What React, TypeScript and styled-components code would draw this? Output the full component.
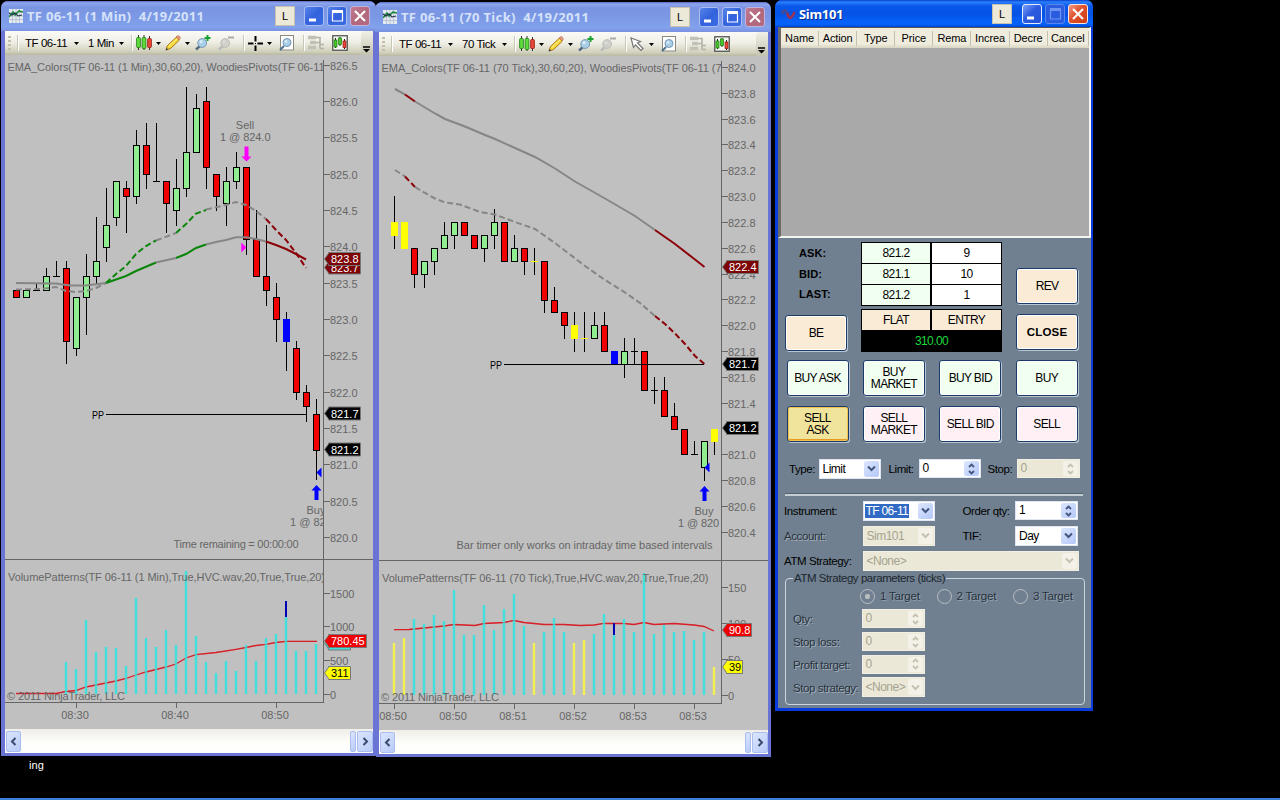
import React from "react";
import styled, { createGlobalStyle, css } from "styled-components";

const Global = createGlobalStyle`
  html, body { margin: 0; padding: 0; background: #000; overflow: hidden; }
  * { box-sizing: border-box; }
`;

const UI = `"Liberation Sans", Arial, sans-serif`;

/* ---------- desktop and windows ---------- */

const Desktop = styled.main`
  position: relative;
  width: 1280px;
  height: 800px;
  background: #000;
  border-bottom: 2px solid #3c7fd8;
  overflow: hidden;
  font: 11px ${UI};
  color: #000;
`;

const DesktopLabel = styled.div`
  position: absolute;
  left: 29px;
  top: 759px;
  color: #fff;
  letter-spacing: 0.1px;
`;

const Win = styled.section<{ $x: number; $y: number; $w: number; $h: number; $active?: boolean }>`
  position: absolute;
  left: ${(p) => p.$x}px;
  top: ${(p) => p.$y}px;
  width: ${(p) => p.$w}px;
  height: ${(p) => p.$h}px;
  display: flex;
  flex-direction: column;
  border-style: solid;
  border-width: 0 ${(p) => (p.$active ? 2 : 3)}px 3px ${(p) => (p.$active ? 3 : p.$x < 10 ? 4 : 3)}px;
  border-color: ${(p) => (p.$active ? "#0a3cdc" : "#6a74d4")};
  border-radius: 7px 7px 0 0;
  background: ${(p) => (p.$active ? "#0a52e6" : "#7b96e4")};
`;

const TitleBar = styled.header<{ $active?: boolean; $h: number }>`
  flex: none;
  height: ${(p) => p.$h}px;
  margin: 0 ${(p) => (p.$active ? -2 : -3)}px 0 ${(p) => (p.$active ? -3 : -4)}px;
  padding: 0 ${(p) => (p.$active ? 5 : 6)}px 0 ${(p) => (p.$active ? 6 : 8)}px;
  display: flex;
  align-items: center;
  border-radius: 7px 7px 0 0;
  background: ${(p) =>
    p.$active
      ? "linear-gradient(#0a3fd0 0, #2a80fa 2px, #0a58ea 6px, #0553e4 14px, #0562fb 22px, #0560f5 25px, #0342c8 100%)"
      : "linear-gradient(#5b6cc4 0, #8ea6ee 2px, #7a94e2 6px, #7b98e4 15px, #82a2ec 26px, #7a90e0 100%)"};
`;

const Title = styled.h1<{ $active?: boolean; $ls: number }>`
  flex: 1;
  margin: 0 0 0 ${(p) => (p.$active ? 3 : 4)}px;
  font: bold 13px "Noto Sans", "Open Sans", sans-serif;
  letter-spacing: ${(p) => p.$ls}px;
  white-space: pre;
  color: ${(p) => (p.$active ? "#fff" : "#d6e2fa")};
  ${(p) => p.$active && css`text-shadow: 1px 1px #0a2a90;`}
`;

const LinkBox = styled.span<{ $gap: number }>`
  width: 20px;
  height: 20px;
  margin-right: ${(p) => p.$gap}px;
  display: flex;
  align-items: center;
  justify-content: center;
  background: #ece9d8;
  border: 1px solid #c6c2ae;
  font-size: 11px;
`;

const CaptionButtons = styled.div`
  display: flex;
  gap: 3px;
`;

const CaptionButton = styled.button<{ $bg: string; $edge: string }>`
  width: 20px;
  height: 20px;
  padding: 0;
  border: 1px solid ${(p) => p.$edge};
  border-radius: 3px;
  background: ${(p) => p.$bg};
  display: block;
  svg { display: block; width: 18px; height: 18px; }
`;

function Caption({ active }: { active?: boolean }) {
  const blue = active
    ? "linear-gradient(135deg,#7ba0f8,#2c5be0 45%,#2450d8)"
    : "linear-gradient(135deg,#5a84ea,#3262dc 50%,#3a6ce4)";
  const edge = active ? "#e6eefc" : "#a9bdf2";
  return (
    <CaptionButtons>
      <CaptionButton $bg={blue} $edge={edge} aria-label="Minimize">
        <svg viewBox="0 0 18 18"><path d="M4 13h7" stroke="#fff" strokeWidth="3" /></svg>
      </CaptionButton>
      <CaptionButton $bg={active ? "#2a5ce0" : blue} $edge={active ? "#5a86ee" : edge} aria-label="Maximize">
        <svg viewBox="0 0 18 18">
          <path d="M4 4.5h10.5v9.5H4.5V4.5" fill="none" stroke={active ? "#6d94f0" : "#fff"} strokeWidth="1.2" />
          <path d="M4 4.5h11" stroke={active ? "#6d94f0" : "#fff"} strokeWidth="3" />
        </svg>
      </CaptionButton>
      <CaptionButton
        $bg={active ? "linear-gradient(135deg,#f09a80,#e0502c 45%,#cc3c14)" : "linear-gradient(135deg,#c07c94,#b4687c 50%,#b06a80)"}
        $edge={active ? "#fbe6e0" : "#c2b2dc"}
        aria-label="Close"
      >
        <svg viewBox="0 0 18 18"><path d="M4 4l10 10M14 4L4 14" stroke="#fff" strokeWidth="2.1" /></svg>
      </CaptionButton>
    </CaptionButtons>
  );
}

/* ---------- toolbar ---------- */

const Bar = styled.div<{ $h: number }>`
  flex: none;
  height: ${(p) => p.$h}px;
  display: flex;
  align-items: center;
  background: linear-gradient(#fbfaf6, #f0efe6 45%, #d2d1bd 85%, #b9b8a2);
  overflow: hidden;
`;

const Slot = styled.span<{ $w: number; $align?: string }>`
  flex: none;
  width: ${(p) => p.$w}px;
  height: 22px;
  display: flex;
  align-items: center;
  justify-content: ${(p) => p.$align ?? "center"};
  white-space: nowrap;
  svg { display: block; flex: none; }
`;

const BarText = styled(Slot)`
  justify-content: flex-start;
  font: 11.5px ${UI};
  letter-spacing: -0.45px;
`;

const Divider = styled.i`
  flex: none;
  width: 2px;
  height: 16px;
  border-left: 1px solid #c9c7b6;
  border-right: 1px solid #fff;
`;

const Grip = styled.i`
  flex: none;
  width: 3px;
  height: 15px;
  margin: 0 6px 0 3px;
  background: repeating-linear-gradient(#c2bfae 0 2px, transparent 2px 4px);
`;

const Overflow = styled.span`
  margin-left: auto;
  align-self: stretch;
  width: 12px;
  display: flex;
  align-items: flex-end;
  justify-content: center;
  padding-bottom: 2px;
  border-radius: 4px 0 0 0;
  background: linear-gradient(#f1f0e8, #c4c3b0);
`;

const Drop = ({ w }: { w: number }) => (
  <Slot $w={w}><svg width="5" height="3"><path d="M0 0h5L2.5 3z" fill="#000" /></svg></Slot>
);

const CandlesIcon = () => (
  <svg width="16" height="16" viewBox="0 0 16 16">
    <path d="M2.5 0v15M8 0v15M13.5 1v14" stroke="#333" />
    <rect x="0.6" y="2.5" width="3.8" height="10" rx="1" fill="#5fdc3c" stroke="#1d7a10" strokeWidth=".8" />
    <rect x="6.100" y="2.5" width="3.8" height="11" rx="1" fill="#5fdc3c" stroke="#1d7a10" strokeWidth=".8" />
    <rect x="11.6" y="3.5" width="3.8" height="9" rx="1" fill="#e8483c" stroke="#96180e" strokeWidth=".8" />
  </svg>
);
const PencilIcon = () => (
  <svg width="16" height="16" viewBox="0 0 16 16">
    <path d="M1 15l1.5-4.5L11.5 2l3 3-9 8.5z" fill="#f8d838" stroke="#a87818" />
    <path d="M11.2 2l1-1q1-.8 2.2.3t.6 2.4l-1 1z" fill="#f2a088" stroke="#a86040" strokeWidth=".7" />
    <path d="M3.5 11.5L12 3.8" stroke="#fff09a" />
    <path d="M.7 15.4l.8-2.6 1.8 1.6z" fill="#444" />
  </svg>
);
const ZoomIcon = ({ minus }: { minus?: boolean }) => (
  <svg width="16" height="16" viewBox="0 0 16 16">
    <path d="M1 14.5l4-3.5" stroke={minus ? "#bbb" : "#556b80"} strokeWidth="2.4" />
    <circle cx="7.2" cy="8" r="4.4" fill={minus ? "#d0d0ca" : "#a9cfe8"} stroke={minus ? "#bcbcb6" : "#7697b4"} />
    <circle cx="6" cy="6.7" r="1.6" fill={minus ? "#dcdcd6" : "#d8edf8"} />
    {minus ? <path d="M10 2.5h6" stroke="#aaa" strokeWidth="2" /> : <path d="M12.5 0v6M9.5 3h6" stroke="#1aa030" strokeWidth="2" />}
  </svg>
);
const CrossIcon = () => (
  <svg width="15" height="15" viewBox="0 0 15 15">
    <path d="M7.5 0v5.5M7.5 9.5v5.5M0 7.5h5.5M9.5 7.5h5.5" stroke="#000" strokeWidth="2" />
    <path d="M7 7.5h1" stroke="#000" />
  </svg>
);
const CursorIcon = () => (
  <svg width="14" height="15" viewBox="0 0 14 15">
    <path d="M1 1l2.5 9.5 2-2.5 5.500 5.500 2-2-5.500-5.500 3-1.500z" fill="#fff" stroke="#777" strokeWidth="1.2" />
  </svg>
);
const PageZoomIcon = () => (
  <svg width="15" height="16" viewBox="0 0 15 16">
    <rect x="1.5" y=".5" width="13" height="14.5" fill="#fff" stroke="#8a8a80" />
    <path d="M1 15l4-4" stroke="#50708c" strokeWidth="2" />
    <circle cx="8" cy="7.5" r="4" fill="#a9cfe8" stroke="#7697b4" />
    <circle cx="7" cy="6.4" r="1.4" fill="#d8edf8" />
  </svg>
);
const TreeIcon = () => (
  <svg width="16" height="16" viewBox="0 0 16 16">
    <path d="M0 2.5h8M2 7.5h6M0 12.5h8" stroke="#c2c1b6" strokeWidth="3.6" />
    <path d="M8 2.5h4v11M8 7.5h4M12 13.5h4M12 9.5h4" stroke="#b4b3a8" strokeWidth="1.6" fill="none" />
  </svg>
);
const ChartIcon = () => (
  <svg width="16" height="16" viewBox="0 0 16 16">
    <rect x=".75" y=".75" width="14.5" height="14.5" fill="#f6f8f2" stroke="#555" strokeWidth="1.3" />
    <path d="M3.5 3v10M8 2v9M12.5 4v10" stroke="#222" />
    <rect x="2" y="5" width="3" height="7" fill="#48c828" stroke="#1d7a10" strokeWidth=".7" />
    <rect x="6.5" y="3" width="3" height="6.5" fill="#48c828" stroke="#1d7a10" strokeWidth=".7" />
    <rect x="11" y="6" width="3" height="6.5" fill="#e8483c" stroke="#96180e" strokeWidth=".7" />
  </svg>
);
const AppIcon = () => (
  <svg width="14" height="14" viewBox="0 0 14 14">
    <rect width="14" height="14" fill="#e4ebf2" />
    <path d="M0 3.5h14M0 7h14M0 10.5h14M3.5 0v14M7 0v14M10.5 0v14" stroke="#a9b6c4" strokeWidth=".7" />
    <path d="M0 8l4-5 2 3 4-4 4 1" fill="none" stroke="#1f8a3c" strokeWidth="1.6" />
    <path d="M0 4l3 2 3-2 3 3 4-1" fill="none" stroke="#234" strokeWidth="1.1" />
  </svg>
);
const WaveIcon = () => (
  <svg width="15" height="12" viewBox="0 0 15 12">
    <path d="M1 6q2-5 4-3t3 6" fill="none" stroke="#4a4a90" strokeWidth="2.4" />
    <path d="M6 5q2 6 4 4.5T13.5 4" fill="none" stroke="#a03050" strokeWidth="2.4" />
  </svg>
);

function Toolbar({ period, periodW, cursor, lead, h }: { period: string; periodW: number; cursor?: boolean; lead: number; h: number }) {
  return (
    <Bar $h={h}>
      <Grip />
      <Divider />
      <Slot $w={lead} />
      <BarText $w={47}>TF 06-11</BarText>
      <Drop w={9} />
      <Slot $w={7} />
      <BarText $w={periodW}>{period}</BarText>
      <Drop w={9} />
      <Slot $w={5} />
      <Divider />
      <Slot $w={21}><CandlesIcon /></Slot>
      <Drop w={8} />
      <Slot $w={21}><PencilIcon /></Slot>
      <Drop w={8} />
      <Slot $w={cursor ? 23 : 24}><ZoomIcon /></Slot>
      <Slot $w={22}><ZoomIcon minus /></Slot>
      <Slot $w={6} />
      <Divider />
      <Slot $w={20}>{cursor ? <CursorIcon /> : <CrossIcon />}</Slot>
      <Drop w={8} />
      <Slot $w={26}><PageZoomIcon /></Slot>
      <Slot $w={4} />
      <Divider />
      <Slot $w={22}><TreeIcon /></Slot>
      <Slot $w={25}><ChartIcon /></Slot>
      <Overflow>
        <svg width="8" height="7"><path d="M0 1h7" stroke="#000" strokeWidth="1.5" /><path d="M0 3h7L3.5 6.5z" fill="#000" /></svg>
      </Overflow>
    </Bar>
  );
}

/* ---------- chart ---------- */

const ChartSvg = styled.svg`
  display: block;
  flex: none;
  background: #c0c0c0;
  font: 11px ${UI};
`;
const Label = styled.text<{ $c?: string }>`
  fill: ${(p) => p.$c ?? "#666"};
  white-space: pre;
`;

type Candle = [kind: string, top: number, bottom: number, high: number, low: number];
type Seg = { c: string; p: string };
type Vol = { x: number; y: number; c?: string; blueTo?: number };
type Tag = { y: number; text: string; fill: string; ink?: string; w: number };

const GRAY = "#868686";
const GREEN = "#0a850a";
const MAROON = "#8b0008";
const FILL: Record<string, string> = { R: "#f00000", G: "#90ee90", B: "#0000ff", Y: "#ffff00", D: "#000" };

function Candles({ data, x0, yOf }: { data: Candle[]; x0: number; yOf: (p: number) => number }) {
  return (
    <g shapeRendering="crispEdges">
      {data.map(([k, t, b, h, l], i) => {
        const x = x0 + i * 10;
        const yt = Math.round(yOf(t));
        const yb = Math.round(yOf(b));
        const plain = k === "B" || k === "Y";
        return (
          <g key={i}>
            <path d={`M${x + 0.5} ${Math.round(yOf(h))}V${Math.round(yOf(l)) + 1}`} stroke="#000" />
            {t === b ? (
              <path d={`M${x - 3} ${yt + 0.5}h7`} stroke={k === "Y" ? "#ff0" : "#000"} />
            ) : (
              <rect x={x - 2.5} y={yt + 0.5} width={6} height={yb - yt} fill={FILL[k]} stroke={plain ? FILL[k] : "#000"} />
            )}
          </g>
        );
      })}
    </g>
  );
}

const Lines = ({ segs, dash }: { segs: Seg[]; dash?: boolean }) => (
  <g fill="none" strokeWidth="2" strokeDasharray={dash ? "6 3" : undefined}>
    {segs.map((s, i) => <polyline key={i} points={s.p} stroke={s.c} />)}
  </g>
);

const PriceTag = ({ x, t }: { x: number; t: Tag }) => (
  <g>
    <path
      d={`M${x + 1.5} ${t.y}l4-5.5v-1h${t.w}v13h-${t.w}v-1z`}
      fill={t.fill}
      stroke="#777"
      strokeWidth="1"
    />
    <Label x={x + 8} y={t.y + 4} $c={t.ink ?? "#fff"}>{t.text}</Label>
  </g>
);

type ChartProps = {
  box: [number, number, number, number];
  axisX: number;
  splitY: number;
  bottomY: number;
  title: [string, number];
  volTitle: [string, number, number];
  note: [string, number, number];
  prices: [string, number][];
  volumes: [string, number][];
  times: [string, number][];
  candles: Candle[];
  x0: number;
  yOf: (p: number) => number;
  solid: Seg[];
  dashed: Seg[];
  vols: Vol[];
  volBase: number;
  avg: string;
  tags: Tag[];
  pp: [number, number, number];
  marks: React.ReactNode;
};

function Chart(c: ChartProps) {
  const [bx, by, bw, bh] = c.box;
  const clip = `plot${bx}`;
  return (
    <ChartSvg width={bw} height={bh} viewBox={c.box.join(" ")}>
      <clipPath id={clip}><rect x={bx} y={by} width={c.axisX - bx} height={bh} /></clipPath>
      <g stroke="#666" fill="none" shapeRendering="crispEdges">
        <path d={`M${c.axisX + 0.5} ${by + 5}V${c.bottomY + 1}M${bx} ${c.splitY + 0.5}H${bx + bw}M${bx} ${c.bottomY + 0.5}H${c.axisX}`} />
        {[...c.prices, ...c.volumes].map(([s, y]) => <path key={s + y} d={`M${c.axisX + 1} ${Math.round(y) - 0.5}h6`} />)}
        {c.times.map(([, x]) => <path key={x} d={`M${x + 0.5} ${c.bottomY}v6`} />)}
      </g>
      {[...c.prices, ...c.volumes].map(([s, y]) => <Label key={s + y} x={c.axisX + 7} y={y + 4}>{s}</Label>)}
      {c.times.map(([s, x]) => <Label key={x} x={x - 1} y={c.bottomY + 17} textAnchor="middle">{s}</Label>)}
      <g clipPath={`url(#${clip})`}>
        <Candles data={c.candles} x0={c.x0} yOf={c.yOf} />
        <Lines segs={c.solid} />
        <Lines segs={c.dashed} dash />
        <polyline points={c.avg} fill="none" stroke="#d82028" strokeWidth="1.3" />
        {c.vols.map((v) => {
          const top = Math.round(v.blueTo ?? v.y);
          return (
            <g key={v.x}>
              <rect x={v.x - 1.2} y={top} width={2.4} height={c.volBase - top} fill={v.c ?? "#40e0dc"} />
              {v.blueTo && <rect x={v.x - 1} y={Math.round(v.y)} width={2} height={v.blueTo - v.y} fill="#0000b4" />}
            </g>
          );
        })}
        <polyline points={c.avg} fill="none" stroke="#d82028" strokeWidth="1" opacity=".25" />
        <path d={`M${c.pp[0]} ${c.pp[2] + 0.5}H${c.pp[1]}`} stroke="#000" shapeRendering="crispEdges" />
        <Label x={c.pp[0] - 14} y={c.pp[2] + 4.5} $c="#000" textLength={12} lengthAdjust="spacingAndGlyphs">PP</Label>
        {c.marks}
        <Label x={bx + 2.5} y={by + 16} textLength={c.title[1]}>{c.title[0]}</Label>
        <Label x={bx + 3} y={c.volTitle[2]} textLength={c.volTitle[1]}>{c.volTitle[0]}</Label>
        <Label x={c.note[1]} y={c.splitY - 11} textLength={c.note[2]}>{c.note[0]}</Label>
        <Label x={bx + 2} y={c.bottomY - 2.5} textLength={118}>© 2011 NinjaTrader, LLC</Label>
      </g>
      {c.tags.map((t, i) => <PriceTag key={i} x={c.axisX} t={t} />)}
    </ChartSvg>
  );
}

const ScrollRow = styled.div`
  flex: 1;
  display: flex;
  align-items: center;
  background: linear-gradient(#efeee8, #fefefc 60%);
`;
const ScrollKey = styled.span<{ $w: number; $push?: boolean }>`
  width: ${(p) => p.$w}px;
  height: 21px;
  margin-left: ${(p) => (p.$push ? "auto" : "1px")};
  border: 1px solid #a9bdf0;
  border-radius: 2px;
  background: linear-gradient(135deg, #dbe5fe, #b9cbf8);
  display: flex;
  align-items: center;
  justify-content: center;
`;
const Scroll = () => (
  <ScrollRow>
    <ScrollKey $w={15}><svg width="7" height="9"><path d="M5.5 1L2 4.5 5.5 8" fill="none" stroke="#3a4a6e" strokeWidth="2" /></svg></ScrollKey>
    <ScrollKey $w={6} $push />
    <ScrollKey $w={16}><svg width="7" height="9"><path d="M1.5 1L5 4.5 1.5 8" fill="none" stroke="#3a4a6e" strokeWidth="2" /></svg></ScrollKey>
  </ScrollRow>
);

const candles1: Candle[] = [
  ["R", 823.4, 823.3, 823.4, 823.3], ["G", 823.4, 823.3, 823.4, 823.3], ["D", 823.4, 823.4, 823.5, 823.4],
  ["G", 823.6, 823.4, 823.7, 823.4], ["D", 823.6, 823.6, 823.8, 823.6], ["R", 823.7, 822.7, 823.8, 822.4],
  ["G", 823.3, 822.6, 823.3, 822.5], ["G", 823.6, 823.3, 823.9, 822.8], ["G", 823.8, 823.6, 824.4, 823.5],
  ["G", 824.3, 824.0, 824.8, 823.8], ["G", 824.9, 824.4, 824.9, 824.3], ["R", 824.8, 824.7, 824.9, 824.2],
  ["G", 825.4, 824.7, 825.6, 824.6], ["R", 825.4, 825.0, 825.7, 824.8], ["D", 824.9, 824.9, 825.7, 824.9],
  ["R", 824.9, 824.6, 824.9, 824.2], ["G", 824.8, 824.5, 825.2, 824.3], ["G", 825.3, 824.8, 826.2, 824.7],
  ["G", 825.9, 825.3, 826.1, 825.3], ["R", 826.0, 825.1, 826.2, 824.8], ["R", 825.0, 824.7, 825.0, 824.5],
  ["G", 824.9, 824.6, 825.1, 824.3], ["G", 825.1, 824.9, 825.3, 824.8], ["R", 825.1, 824.1, 825.1, 823.9],
  ["R", 824.1, 823.6, 824.5, 823.6], ["R", 823.6, 823.4, 824.3, 823.2], ["R", 823.3, 823.0, 823.5, 822.7],
  ["B", 823.0, 822.7, 823.1, 822.3], ["R", 822.6, 822.0, 822.7, 821.9], ["R", 822.0, 821.8, 822.1, 821.6],
  ["R", 821.7, 821.2, 821.9, 820.8],
];

const candles2: Candle[] = [
  ["Y", 822.8, 822.7, 823.0, 822.6], ["Y", 822.8, 822.6, 822.8, 822.6], ["R", 822.6, 822.4, 822.6, 822.3],
  ["G", 822.5, 822.4, 822.5, 822.3], ["G", 822.6, 822.5, 822.6, 822.4], ["G", 822.7, 822.6, 822.8, 822.6],
  ["G", 822.8, 822.7, 822.8, 822.6], ["R", 822.8, 822.7, 822.8, 822.7], ["R", 822.7, 822.6, 822.7, 822.6],
  ["G", 822.7, 822.6, 822.7, 822.5], ["G", 822.8, 822.7, 822.9, 822.6], ["R", 822.8, 822.5, 822.8, 822.5],
  ["G", 822.6, 822.5, 822.7, 822.5], ["R", 822.6, 822.5, 822.6, 822.4], ["Y", 822.5, 822.5, 822.6, 822.4],
  ["R", 822.5, 822.2, 822.5, 822.1], ["R", 822.2, 822.1, 822.3, 822.1], ["R", 822.1, 822.0, 822.1, 821.9],
  ["Y", 822.0, 821.9, 822.1, 821.8], ["Y", 821.9, 821.9, 822.1, 821.8], ["G", 822.0, 821.9, 822.1, 821.9],
  ["R", 822.0, 821.8, 822.1, 821.8], ["B", 821.8, 821.7, 821.8, 821.7], ["G", 821.8, 821.7, 821.9, 821.6],
  ["D", 821.8, 821.8, 821.9, 821.7], ["R", 821.8, 821.5, 821.8, 821.5], ["D", 821.5, 821.5, 821.6, 821.4],
  ["R", 821.5, 821.3, 821.6, 821.3], ["R", 821.3, 821.2, 821.4, 821.2], ["R", 821.2, 821.0, 821.2, 821.0],
  ["D", 821.0, 821.0, 821.1, 821.0], ["G", 821.1, 820.9, 821.1, 820.8], ["Y", 821.2, 821.1, 821.2, 821.0],
];

const yOf1 = (p: number) => 101.2 + (826 - p) * 72.65;
const yOf2 = (p: number) => 67.4 + (824 - p) * 129;

const vols1: Vol[] = [662, 669, 619.7, 652, 647, 648, 666, 597.7, 638, 647, 630, 644.7, 571, 636, 662, 672.7, 660.7, 671, 644.7, 661, 638, 634, 601, 651, 651, 644]
  .map((y, i) => ({ x: 66 + i * 10, y, blueTo: i === 22 ? 617 : undefined }));
const yellowBars = [0, 1, 14, 18, 19, 32];
const vols2: Vol[] = [642.7, 637.7, 619.3, 624, 614.7, 621.3, 589.7, 634.7, 635.3, 604.7, 629.7, 608.7, 594, 626.3, 642.7, 632.3, 617.7, 632.3, 642.7, 639.7, 634.3, 614.3, 623, 619.3, 632.3, 573.3, 634.3, 625, 632.3, 631, 639.7, 632.3, 666.7]
  .map((y, i) => ({ x: 394 + i * 10, y, c: yellowBars.includes(i) ? "#f4f050" : undefined, blueTo: i === 22 ? 635 : undefined }));

const prices1: [string, number][] = Array.from({ length: 14 }, (_, i) => [(826.5 - i * 0.5).toFixed(1), 65.6 + i * 36.33] as [string, number]);
const prices2: [string, number][] = Array.from({ length: 19 }, (_, i) => [(824 - i * 0.2).toFixed(1), 68 + i * 25.82] as [string, number])
  .filter(([s]) => s !== "821.2");

const UpArrow = ({ x, y }: { x: number; y: number }) => (
  <path d={`M${x} ${y}l5 5.5h-3v9.5h-4v-9.5h-3z`} fill="#0000ff" />
);

const chart1: ChartProps = {
  box: [5, 55, 368, 674], axisX: 323, splitY: 559, bottomY: 702,
  title: ["EMA_Colors(TF 06-11 (1 Min),30,60,20), WoodiesPivots(TF 06-11", 317],
  volTitle: ["VolumePatterns(TF 06-11 (1 Min),True,HVC.wav,20,True,True,20)", 317, 581],
  note: ["Time remaining = 00:00:00", 173.5, 125],
  prices: prices1,
  volumes: [["1500", 594], ["1000", 627], ["500", 661], ["0", 694.5]],
  times: [["08:30", 76], ["08:40", 176], ["08:50", 276]],
  candles: candles1, x0: 16, yOf: yOf1,
  solid: [
    { c: GRAY, p: "16,283 56,283.5 70,285.5 86,285.5 106,283" },
    { c: GREEN, p: "106,283 126,276 136,271 156,262.5" },
    { c: GRAY, p: "156,262.5 176,258" },
    { c: GREEN, p: "176,258 186,254 196,248 206,244.5" },
    { c: GRAY, p: "206,244.5 216,242 226,240 236,237.3 246,237.3 256,239 266,241.5" },
    { c: MAROON, p: "266,241.5 276,245 286,249 296,254 306,259.5" },
  ],
  dashed: [
    { c: GRAY, p: "16,289.5 40,289 56,287 66,291 76,292 86,291 96,288 106,283" },
    { c: GREEN, p: "106,283 116,274 126,266 136,254 146,246 156,240.5" },
    { c: GRAY, p: "156,240.5 176,233" },
    { c: GREEN, p: "176,233 186,224 196,213.5 206,210" },
    { c: GRAY, p: "206,209.5 226,205 236,202 246,205 256,211 266,219" },
    { c: MAROON, p: "266,219 276,230 286,240 296,253 306,268" },
  ],
  vols: vols1, volBase: 694,
  avg: "16,693.5 56,693.5 66,691.5 76,690.5 86,687 106,683 116,681 126,678.5 136,675 146,672 156,669.5 166,667 176,664 186,658 196,654.7 216,652.5 236,649.3 246,647.5 256,645.5 266,644.3 276,642.5 286,641.3 317,641.3",
  tags: [
    { y: 267.5, text: "823.7", fill: "#7c0404", w: 32 },
    { y: 259, text: "823.8", fill: "#7c0404", w: 32 },
    { y: 413.5, text: "821.7", fill: "#000", w: 32 },
    { y: 449.5, text: "821.2", fill: "#000", w: 32 },
    { y: 643.5, text: "", fill: "#40e0dc", w: 22 },
    { y: 641, text: "780.45", fill: "#ee0000", w: 38 },
    { y: 673, text: "311", fill: "#ffff00", ink: "#000", w: 22 },
  ],
  pp: [106, 306, 414],
  marks: (
    <>
      <Label x={245} y={129} textAnchor="middle">Sell</Label>
      <Label x={220} y={141} textLength={50.5}>1 @ 824.0</Label>
      <path d="M246.5 161.5l-5-5h3v-10h4v10h3z" fill="#ff00ff" />
      <path d="M241.3 242.5v10l5-5z" fill="#ff00ff" />
      <path d="M321.5 467.5v10l-5-5z" fill="#0000ff" />
      <UpArrow x={316.5} y={485} />
      <Label x={306.5} y={514}>Buy</Label>
      <Label x={290} y={526}>1 @ 821.2</Label>
    </>
  ),
};

const chart2: ChartProps = {
  box: [379, 56, 389, 674], axisX: 721, splitY: 560, bottomY: 703,
  title: ["EMA_Colors(TF 06-11 (70 Tick),30,60,20), WoodiesPivots(TF 06-11 (7", 340],
  volTitle: ["VolumePatterns(TF 06-11 (70 Tick),True,HVC.wav,20,True,True,20)", 326.5, 582],
  note: ["Bar timer only works on intraday time based intervals", 456.5, 256],
  prices: prices2,
  volumes: [["150", 588], ["100", 624], ["50", 659.5], ["0", 696]],
  times: [["08:50", 394], ["08:50", 454], ["08:51", 514], ["08:52", 574], ["08:53", 634], ["08:53", 694]],
  candles: candles2, x0: 394, yOf: yOf2,
  solid: [
    { c: GRAY, p: "395,89 405,94.5" },
    { c: MAROON, p: "405,94.5 415,101.5" },
    { c: GRAY, p: "415,101.5 435,113.5 445,119 465,126.5 485,135 495,139 515,148 535,157 555,168.5 575,181.5 605,198.5 635,216 655,230" },
    { c: MAROON, p: "655,230 675,244 695,259.5 704.5,267" },
  ],
  dashed: [
    { c: GRAY, p: "395,170 405,176.5" },
    { c: MAROON, p: "405,176.5 415,187" },
    { c: GRAY, p: "415,187 425,193 435,198.5 445,202.5 460,204.5 480,212 495,214.5 515,222 535,229 555,243 585,266 605,280 625,292.5 640,303 655,316" },
    { c: MAROON, p: "655,316 665,324 675,333.5 685,344 695,356 704.5,364" },
  ],
  vols: vols2, volBase: 695,
  avg: "394,629.7 409,629.5 424,628 444,626 454,624.5 475,625.5 484,623.5 504,622.5 514,620.5 524,622.5 544,624.5 564,624.5 580,625.5 594,625 604,623.3 624,623.5 634,624.5 644,622.5 654,624.5 674,623.5 694,625 704,626.5 714,631",
  tags: [
    { y: 267, text: "822.4", fill: "#7c0404", w: 32 },
    { y: 364, text: "821.7", fill: "#000", w: 32 },
    { y: 428, text: "821.2", fill: "#000", w: 32 },
    { y: 630, text: "90.8", fill: "#ee0000", w: 25 },
    { y: 667, text: "39", fill: "#ffff00", ink: "#000", w: 16 },
  ],
  pp: [504, 704, 364],
  marks: (
    <>
      <path d="M709.5 462.5v10l-5-5z" fill="#0000ff" />
      <UpArrow x={704.5} y={486} />
      <Label x={694.5} y={515}>Buy</Label>
      <Label x={678} y={527} textLength={41}>1 @ 820</Label>
    </>
  ),
};

/* ---------- order entry window ---------- */

const GridBox = styled.div`
  flex: none;
  height: 211px;
  display: flex;
  flex-direction: column;
  background: #a9a9a9;
  border: solid;
  border-width: 1px 2px 2px 2px;
  border-color: #555 #f4f4f0 #f4f4f0 #6a6a66;
  border-left-width: 3px;
`;
const HeadRow = styled.div`
  height: 20px;
  display: grid;
  grid-template-columns: repeat(7, 38.1px) 1fr;
  align-items: center;
  background: linear-gradient(#efecde 80%, #d8d4c2);
`;
const HeadCell = styled.span`
  height: 15px;
  line-height: 15px;
  text-align: center;
  border-right: 1px solid #c4c0ae;
  letter-spacing: -0.1px;
  overflow: hidden;
  white-space: nowrap;
`;
const Panel = styled.div`
  flex: 1;
  background: #708090;
  display: flex;
  flex-direction: column;
  padding: 4px 3px 0 7px;
`;
const Quotes = styled.div`
  display: grid;
  grid-template-columns: 76px 141px 62px;
  column-gap: 0;
  height: 118px;
`;
const Side = styled.div<{ $right?: boolean }>`
  display: flex;
  flex-direction: column;
  ${(p) => (p.$right ? css`padding: 26px 0 0 14px; gap: 10px; width: 78px;` : css`padding-top: 0;`)}
`;
const QuoteName = styled.b`
  height: 20.5px;
  line-height: 22px;
  padding-left: 14px;
  font-size: 11px;
  letter-spacing: 0.1px;
`;
const QuoteGrid = styled.div`
  display: grid;
  grid-template-columns: 68px 69px;
  grid-auto-rows: 20px;
  gap: 1px;
  column-gap: 2px;
  padding: 1px;
  background: #000;
`;
const QuoteCell = styled.span<{ $bg: string; $ink?: string; $wide?: boolean }>`
  display: flex;
  align-items: center;
  justify-content: center;
  background: ${(p) => p.$bg};
  color: ${(p) => p.$ink ?? "#000"};
  ${(p) => p.$wide && css`grid-column: span 2;`}
  font-size: 12px;
  letter-spacing: -0.6px;
`;
const Position = styled(QuoteGrid)`
  margin-top: 3px;
  height: 43px;
`;
const OrderButton = styled.button<{ $bg: string; $bold?: boolean; $hot?: boolean; $h?: number }>`
  width: 62px;
  height: ${(p) => p.$h ?? 36}px;
  padding: 0;
  border: 1px solid #1c3c68;
  border-radius: 3px;
  background: ${(p) => p.$bg};
  box-shadow: inset 0 0 0 1px ${(p) => (p.$hot ? "#f0c050" : "#fff")}, ${(p) => (p.$hot ? "inset 0 -2px #e69a20, " : "")}1px 1px #b8c4d0;
  color: #000;
  font: ${(p) => (p.$bold ? "bold 11.5px" : "12px")}/12px ${UI};
  letter-spacing: ${(p) => (p.$bold ? 0.2 : -0.65)}px;
`;
const ButtonGrid = styled.div`
  display: grid;
  grid-template-columns: repeat(4, 62px);
  column-gap: 14.4px;
  row-gap: 10px;
  margin: 0 0 0 1.5px;
`;
const FormRow = styled.div<{ $mt: number }>`
  display: flex;
  align-items: center;
  height: 21px;
  margin-top: ${(p) => p.$mt}px;
`;
const FieldName = styled.label<{ $w: number; $dim?: boolean; $indent?: number }>`
  flex: none;
  width: ${(p) => p.$w}px;
  margin-left: ${(p) => p.$indent ?? 0}px;
  padding-top: 1px;
  font-size: 11.5px;
  letter-spacing: -0.4px;
  white-space: nowrap;
  color: ${(p) => (p.$dim ? "#28323c" : "#000")};
  ${(p) => p.$dim && css`text-shadow: 1px 1px #a4b0bc;`}
`;
const FieldBox = styled.span<{ $w: number; $off?: boolean; $mr?: number; $h?: number }>`
  flex: none;
  width: ${(p) => p.$w}px;
  height: ${(p) => p.$h ?? 20}px;
  margin-right: ${(p) => p.$mr ?? 0}px;
  display: flex;
  align-items: center;
  justify-content: space-between;
  padding: 1px 1px 1px 3px;
  border: 1px solid ${(p) => (p.$off ? "#f2f0e4" : "#dfe6f2")};
  background: ${(p) => (p.$off ? "#ebe8d7" : "#fff")};
  color: ${(p) => (p.$off ? "#a5a38f" : "#000")};
  font-size: 12px;
  letter-spacing: -0.5px;
`;
const Picked = styled.mark`
  background: #316ac5;
  color: #fff;
  padding: 0 1px;
  margin-left: -2px;
  line-height: 14px;
  letter-spacing: -0.65px;
`;
const FieldKey = styled.i<{ $off?: boolean }>`
  width: 15px;
  height: 100%;
  display: flex;
  flex-direction: column;
  align-items: center;
  justify-content: center;
  gap: 2px;
  border-radius: 2px;
  background: ${(p) => (p.$off ? "#f3f1e8" : "linear-gradient(135deg,#dce6fe,#b4c8f8)")};
`;
const Raised = styled.span`
  align-self: flex-start;
  line-height: 14px;
`;

function Select({ w, off, mr, picked, children }: { w: number; off?: boolean; mr?: number; picked?: boolean; children: React.ReactNode }) {
  return (
    <FieldBox $w={w} $off={off} $mr={mr}>
      {picked ? <Picked>{children}</Picked> : <span>{children}</span>}
      <FieldKey $off={off}>
        <svg width="9" height="7"><path d="M1 1.5l3.5 3.5L8 1.5" fill="none" stroke={off ? "#c5c2b2" : "#43567e"} strokeWidth="2" /></svg>
      </FieldKey>
    </FieldBox>
  );
}
function Spin({ w, off, mr, children }: { w: number; off?: boolean; mr?: number; children: React.ReactNode }) {
  const ink = off ? "#c5c2b2" : "#43567e";
  return (
    <FieldBox $w={w} $off={off} $mr={mr} $h={19}>
      <Raised>{children}</Raised>
      <FieldKey $off={off}>
        <svg width="7" height="5"><path d="M1 4l2.5-2.5L6 4" fill="none" stroke={ink} strokeWidth="1.8" /></svg>
        <svg width="7" height="5"><path d="M1 1l2.5 2.5L6 1" fill="none" stroke={ink} strokeWidth="1.8" /></svg>
      </FieldKey>
    </FieldBox>
  );
}

const Rule = styled.hr`
  width: 298px;
  height: 3px;
  margin: 14px 0 0 0;
  border: 0;
  background: linear-gradient(#56626e 1px, #c4ccd4 1px);
`;
const Group = styled.fieldset`
  width: 300px;
  height: 134px;
  margin: 0;
  padding: 4px 0 0 7px;
  border: 1px solid #ccd4dc;
  border-radius: 4px;
  min-width: 0;
`;
const Legend = styled.legend`
  padding: 0 1px;
  line-height: 14px;
  font-size: 11.5px;
  color: #1c262e;
  letter-spacing: -0.44px;
`;
const Radios = styled.div`
  display: flex;
  height: 14px;
  padding-left: 67px;
`;
const Radio = styled.label<{ $on?: boolean }>`
  flex: none;
  width: 76.5px;
  display: flex;
  align-items: center;
  gap: 5px;
  font-size: 11.5px;
  letter-spacing: -0.2px;
  color: #28323c;
  text-shadow: 1px 1px #94a2b0;
  white-space: nowrap;
  &::before {
    content: "";
    width: 13px;
    height: 13px;
    border: 1px solid #b8bfc2;
    border-radius: 50%;
    background: ${(p) => (p.$on ? "radial-gradient(circle, #b6bdbc 0 2.3px, transparent 3px)" : "transparent")};
  }
`;
const BreakEven = styled(OrderButton)`
  margin-top: 11px;
`;

function OrderWindow() {
  const mint = "#f0fff0";
  const linen = "#faebd7";
  const rose = "#fff0f5";
  return (
    <Win $x={775} $y={0} $w={318} $h={711} $active>
      <TitleBar $active $h={27}>
        <WaveIcon />
        <Title $active $ls={-0.3}>Sim101</Title>
        <LinkBox $gap={10}>L</LinkBox>
        <Caption active />
      </TitleBar>
      <GridBox>
        <HeadRow>
          {["Name", "Action", "Type", "Price", "Rema", "Increa", "Decre", "Cancel"].map((h) => <HeadCell key={h}>{h}</HeadCell>)}
        </HeadRow>
      </GridBox>
      <Panel>
        <Quotes>
          <Side>
            <QuoteName>ASK:</QuoteName>
            <QuoteName>BID:</QuoteName>
            <QuoteName>LAST:</QuoteName>
            <BreakEven $bg={linen}>BE</BreakEven>
          </Side>
          <div>
            <QuoteGrid>
              <QuoteCell $bg={mint}>821.2</QuoteCell><QuoteCell $bg="#fff">9</QuoteCell>
              <QuoteCell $bg={mint}>821.1</QuoteCell><QuoteCell $bg="#fff">10</QuoteCell>
              <QuoteCell $bg={mint}>821.2</QuoteCell><QuoteCell $bg="#fff">1</QuoteCell>
            </QuoteGrid>
            <Position>
              <QuoteCell $bg={linen}>FLAT</QuoteCell><QuoteCell $bg={linen}>ENTRY</QuoteCell>
              <QuoteCell $bg="#000" $ink="#1fd83c" $wide>310.00</QuoteCell>
            </Position>
          </div>
          <Side $right>
            <OrderButton $bg={linen}>REV</OrderButton>
            <OrderButton $bg={linen} $bold>CLOSE</OrderButton>
          </Side>
        </Quotes>
        <ButtonGrid>
          <OrderButton $bg={mint}>BUY ASK</OrderButton>
          <OrderButton $bg={mint}>BUY<br />MARKET</OrderButton>
          <OrderButton $bg={mint}>BUY BID</OrderButton>
          <OrderButton $bg={mint}>BUY</OrderButton>
          <OrderButton $bg="#f0e39c" $hot>SELL<br />ASK</OrderButton>
          <OrderButton $bg={rose}>SELL<br />MARKET</OrderButton>
          <OrderButton $bg={rose}>SELL BID</OrderButton>
          <OrderButton $bg={rose}>SELL</OrderButton>
        </ButtonGrid>
        <FormRow $mt={16}>
          <FieldName $w={29.5} $indent={4}>Type:</FieldName>
          <Select w={62} mr={8}>Limit</Select>
          <FieldName $w={30}>Limit:</FieldName>
          <Spin w={62} mr={7}>0</Spin>
          <FieldName $w={29}>Stop:</FieldName>
          <Spin w={63} off>0</Spin>
        </FormRow>
        <Rule />
        <FormRow $mt={4}>
          <FieldName $w={78.5} $indent={-1}>Instrument:</FieldName>
          <Select w={72} mr={28} picked>TF 06-11</Select>
          <FieldName $w={52.5}>Order qty:</FieldName>
          <Spin w={63}>1</Spin>
        </FormRow>
        <FormRow $mt={4}>
          <FieldName $w={78.5} $indent={-1} $dim>Account:</FieldName>
          <Select w={72} mr={28} off>Sim101</Select>
          <FieldName $w={52.5}>TIF:</FieldName>
          <Select w={63}>Day</Select>
        </FormRow>
        <FormRow $mt={4}>
          <FieldName $w={78.5} $indent={-1}>ATM Strategy:</FieldName>
          <Select w={216} off>&lt;None&gt;</Select>
        </FormRow>
        <Group>
          <Legend>ATM Strategy parameters (ticks)</Legend>
          <Radios>
            <Radio $on>1 Target</Radio>
            <Radio>2 Target</Radio>
            <Radio>3 Target</Radio>
          </Radios>
          <FormRow $mt={5}><FieldName $w={68.5} $dim>Qty:</FieldName><Spin w={63} off>0</Spin></FormRow>
          <FormRow $mt={2}><FieldName $w={68.5} $dim>Stop loss:</FieldName><Spin w={63} off>0</Spin></FormRow>
          <FormRow $mt={1.5}><FieldName $w={68.5} $dim>Profit target:</FieldName><Spin w={63} off>0</Spin></FormRow>
          <FormRow $mt={2}><FieldName $w={68.5} $dim>Stop strategy:</FieldName><Select w={63} off>&lt;None&gt;</Select></FormRow>
        </Group>
      </Panel>
    </Win>
  );
}

export default function App() {
  return (
    <>
      <Global />
      <Desktop>
        <Win $x={1} $y={1} $w={375} $h={755}>
          <TitleBar $h={30}>
            <AppIcon />
            <Title $ls={0.3}>{"TF 06-11 (1 Min)  4/19/2011"}</Title>
            <LinkBox $gap={9}>L</LinkBox>
            <Caption />
          </TitleBar>
          <Toolbar period="1 Min" periodW={29} lead={6} h={24} />
          <Chart {...chart1} />
          <Scroll />
        </Win>
        <Win $x={376} $y={2} $w={395} $h={755}>
          <TitleBar $h={30}>
            <AppIcon />
            <Title $ls={0.35}>{"TF 06-11 (70 Tick)  4/19/2011"}</Title>
            <LinkBox $gap={9}>L</LinkBox>
            <Caption />
          </TitleBar>
          <Toolbar period="70 Tick" periodW={38} lead={6} h={24} cursor />
          <Chart {...chart2} />
          <Scroll />
        </Win>
        <OrderWindow />
        <DesktopLabel>ing</DesktopLabel>
      </Desktop>
    </>
  );
}
